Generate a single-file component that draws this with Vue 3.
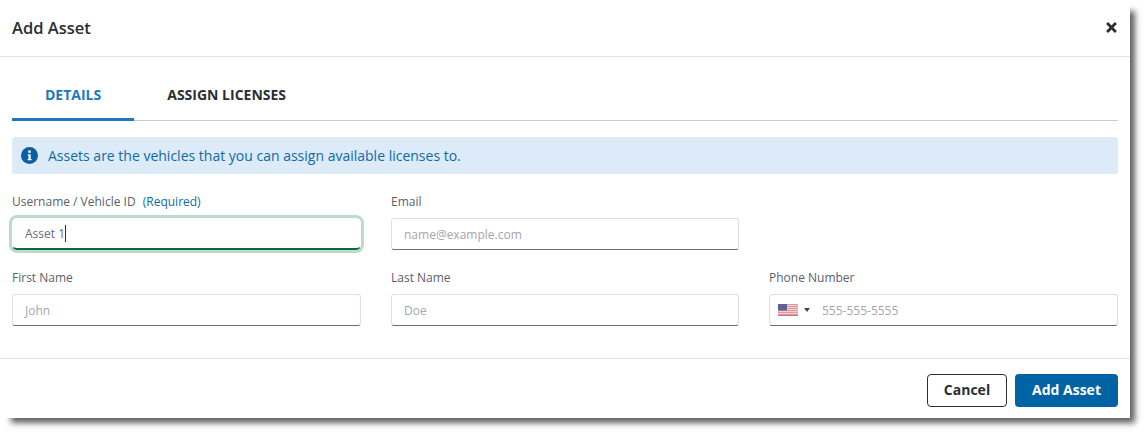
<script setup>
const stripes = [0, 2, 4, 6, 8, 10]
</script>

<template>
  <div class="page">
    <div class="modal">
      <header class="head">
        <h1>Add Asset</h1>
        <svg class="close" viewBox="0 0 10 10" width="11" height="11" aria-label="Close">
          <path d="M1 1 L9 9 M9 1 L1 9" stroke="#2b2e33" stroke-width="2.6" fill="none" />
        </svg>
      </header>

      <div class="body">
        <nav class="tabs">
          <div class="tab active">DETAILS</div>
          <div class="tab">ASSIGN LICENSES</div>
        </nav>

        <div class="alert">
          <svg viewBox="0 0 17 17" width="17" height="17">
            <circle cx="8.5" cy="8.5" r="8.5" fill="#0b5fa5" />
            <circle cx="8.5" cy="4.7" r="1.4" fill="#fff" />
            <path d="M6.8 7.2h2.9v4.7h.9v1.4H6.6v-1.4h.9V8.6h-.7z" fill="#fff" />
          </svg>
          <span>Assets are the vehicles that you can assign available licenses to.</span>
        </div>

        <div class="form">
          <div class="field">
            <label>Username / Vehicle ID <em>(Required)</em></label>
            <div class="input focus"><span class="value">Asset 1</span><i class="caret"></i></div>
          </div>
          <div class="field">
            <label>Email</label>
            <div class="input"><span class="ph">name@example.com</span></div>
          </div>
          <div></div>
          <div class="field">
            <label>First Name</label>
            <div class="input"><span class="ph">John</span></div>
          </div>
          <div class="field">
            <label>Last Name</label>
            <div class="input"><span class="ph">Doe</span></div>
          </div>
          <div class="field">
            <label>Phone Number</label>
            <div class="input phone">
              <svg class="flag" viewBox="0 0 20 12" width="20" height="12">
                <rect width="20" height="12" fill="#f0cfcf" />
                <rect v-for="y in stripes" :key="y" x="0" :y="y" width="20" height="1" fill="#df9a9e" />
                <rect y="11" width="20" height="1" fill="#d0707a" />
                <rect width="9" height="6.5" fill="#5d628f" />
              </svg>
              <svg class="arrow" viewBox="0 0 6 4" width="6" height="4">
                <path d="M0 0h6L3 4z" fill="#444" />
              </svg>
              <span class="ph">555-555-5555</span>
            </div>
          </div>
        </div>
      </div>

      <footer class="foot">
        <button class="btn cancel">Cancel</button>
        <button class="btn primary">Add Asset</button>
      </footer>
    </div>
  </div>
</template>

<style>
html, body { margin: 0; background: #fff; }
</style>

<style scoped>
.page {
  width: 1144px;
  height: 433px;
  overflow: hidden;
  font-family: "Open Sans", sans-serif;
  color: #2b2e33;
}
.modal {
  width: 1130px;
  height: 418px;
  background: #fff;
  box-shadow: 8px 8px 6px -3px rgba(0, 0, 0, 0.62);
  display: flex;
  flex-direction: column;
}
.head {
  height: 57px;
  box-sizing: border-box;
  flex: none;
  border-bottom: 1px solid #dfdfe8;
  display: flex;
  align-items: center;
  justify-content: space-between;
  padding: 0 13px 2px 12px;
}
h1 {
  margin: 0;
  font-size: 16.5px;
  font-weight: 600;
  color: #2b2e33;
}
.body {
  flex: 1;
  padding: 0 12px;
}
.tabs {
  display: flex;
  height: 64px;
  border-bottom: 1px solid #c9c9d4;
  box-sizing: border-box;
}
.tab {
  font-size: 14px;
  font-weight: 700;
  line-height: 76px;
  height: 64px;
  box-sizing: border-box;
  padding: 0 33px;
  color: #2b2e33;
}
.tab.active {
  color: #1b7abf;
  border-bottom: 3px solid #1b7abf;
}
.alert {
  margin-top: 16px;
  height: 37px;
  background: #dcebf7;
  border-radius: 3px;
  display: flex;
  align-items: center;
  gap: 10px;
  padding-left: 9px;
  font-size: 14px;
  color: #0f6aa8;
}
.form {
  margin-top: 19px;
  display: grid;
  grid-template-columns: 349px 348px 349px;
  column-gap: 30px;
  row-gap: 19px;
}
.field { display: flex; flex-direction: column; }
label {
  font-size: 12px;
  line-height: 17px;
  color: #5c5f66;
  margin-bottom: 8px;
  white-space: pre;
}
em {
  font-style: normal;
  color: #0f6aa8;
  margin-left: 4px;
}
.input {
  height: 32px;
  box-sizing: border-box;
  border: 1px solid #dfdfe8;
  border-bottom-color: #6a6c75;
  border-radius: 3px;
  padding: 0 12px;
  display: flex;
  align-items: center;
  font-size: 12px;
  background: #fff;
}
.input.focus {
  border-color: #fff;
  border-bottom: 2px solid #0a6b43;
  box-shadow: 0 0 0 3px #bcdccb;
  border-radius: 5px;
}
.value { color: #6a6c75; }
.caret {
  display: inline-block;
  width: 1px;
  height: 17px;
  background: #333;
}
.ph { color: #a4a6ae; }
.phone { padding-left: 8px; }
.flag { flex: none; }
.arrow { margin-left: 6px; margin-right: 12px; flex: none; }
.foot {
  height: 60px;
  flex: none;
  border-top: 1px solid #dfdfe8;
  display: flex;
  justify-content: flex-end;
  gap: 8px;
  padding: 15px 12px 0;
  box-sizing: border-box;
}
.btn {
  height: 33px;
  box-sizing: border-box;
  border-radius: 4px;
  font-family: inherit;
  font-size: 14px;
  font-weight: 700;
  padding: 0 0 2px;
  cursor: pointer;
}
.cancel {
  width: 80px;
  background: #fff;
  border: 1px solid #2b2e33;
  color: #2b2e33;
}
.primary {
  width: 103px;
  background: #0063a6;
  border: 0;
  color: #fff;
}
</style>
